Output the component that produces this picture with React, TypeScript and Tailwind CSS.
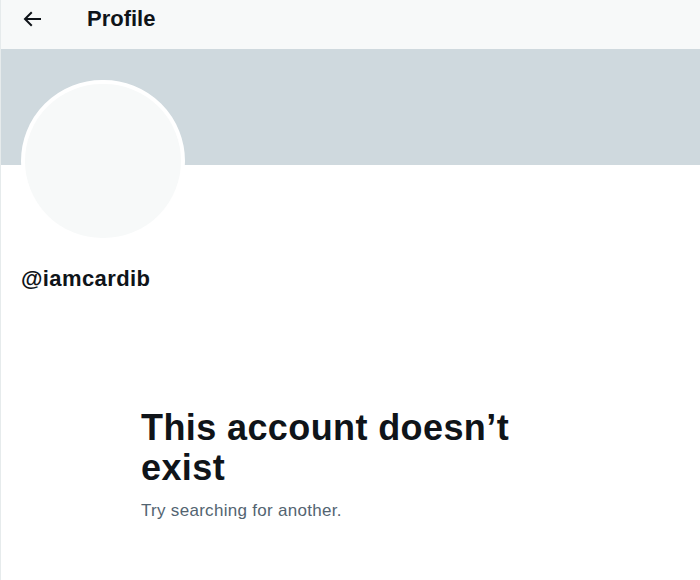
import { FC } from "react";

const BackArrow: FC = () => (
  <svg viewBox="0 0 24 24" width="24" height="24" className="fill-[#0f1419]">
    <path d="M7.414 13l5.043 5.04-1.414 1.42L3.586 12l7.457-7.46 1.414 1.42L7.414 11H21v2H7.414z" />
  </svg>
);

const App: FC = () => {
  return (
    <div
      className="w-[700px] h-[580px] bg-white border-l border-[#e6ebec] overflow-hidden text-[#0f1419]"
      style={{ fontFamily: '"Liberation Sans", Arial, sans-serif' }}
    >
      {/* header */}
      <div className="h-[49px] bg-[#f7f9f9] flex items-start">
        <div className="pl-[19px] pt-[7px]">
          <BackArrow />
        </div>
        <h2 className="ml-[43px] pt-[6px] text-[22px] leading-[26px] font-bold">
          Profile
        </h2>
      </div>

      {/* banner */}
      <div className="h-[116px] bg-[#cfd9de]" />

      {/* avatar */}
      <div className="ml-[20px] -mt-[85px] w-[164px] h-[162px] rounded-full border-4 border-white bg-[#f7f9f9]" />

      <p className="ml-[20px] mt-[24px] text-[22px] leading-[26px] font-bold tracking-[0.4px]">
        @iamcardib
      </p>

      {/* empty state */}
      <div className="ml-[140px] mt-[116px] w-[400px]">
        <h1 className="text-[36px] leading-[40px] font-bold tracking-[0.4px]">
          This account doesn’t exist
        </h1>
        <p className="mt-[13px] text-[17px] leading-[20px] text-[#536471] tracking-[0.3px]">
          Try searching for another.
        </p>
      </div>
    </div>
  );
};

export default App;
